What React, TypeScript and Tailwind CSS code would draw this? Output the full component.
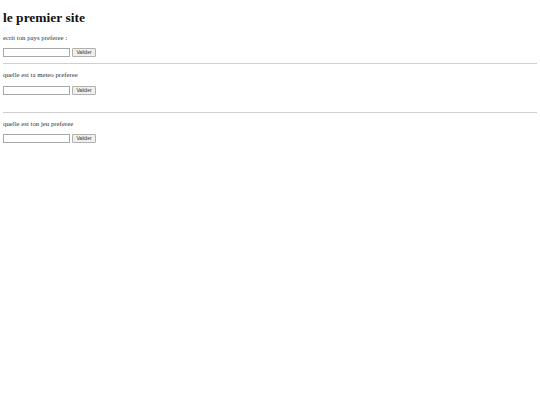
function Field() {
  return (
    <div className="flex items-center gap-[2px]">
      <input
        type="text"
        className="h-[9px] w-[67px] border border-[#a8a8a8] bg-white p-0"
      />
      <button className="flex h-[9px] w-[24px] items-center justify-center rounded-[1px] border border-[#b0b0b0] bg-[#efefef] p-0 font-['Liberation_Sans'] text-[5px] leading-none text-[#333]">
        Valider
      </button>
    </div>
  );
}

export default function App() {
  return (
    <div className="min-h-[405px] w-[540px] bg-white px-[3px] pt-[3px] font-['Liberation_Serif',serif] text-black">
      <h1 className="mt-[7px] text-[13.5px] leading-[15px] font-bold text-[#111]">le premier site</h1>
      <p className="mt-[9px] text-[6.8px] leading-[7px] text-[#333]">ecrit ton pays preferee :</p>
      <div className="mt-[7px]">
        <Field />
      </div>
      <hr className="mt-[6px] border-t border-[#cfcfcf]" />
      <p className="mt-[7px] text-[6.8px] leading-[7px] text-[#333]">quelle est ta meteo preferee</p>
      <div className="mt-[8px]">
        <Field />
      </div>
      <hr className="mt-[17px] border-t border-[#cfcfcf]" />
      <p className="mt-[7px] text-[6.8px] leading-[7px] text-[#333]">quelle est ton jeu preferee</p>
      <div className="mt-[7px]">
        <Field />
      </div>
    </div>
  );
}
